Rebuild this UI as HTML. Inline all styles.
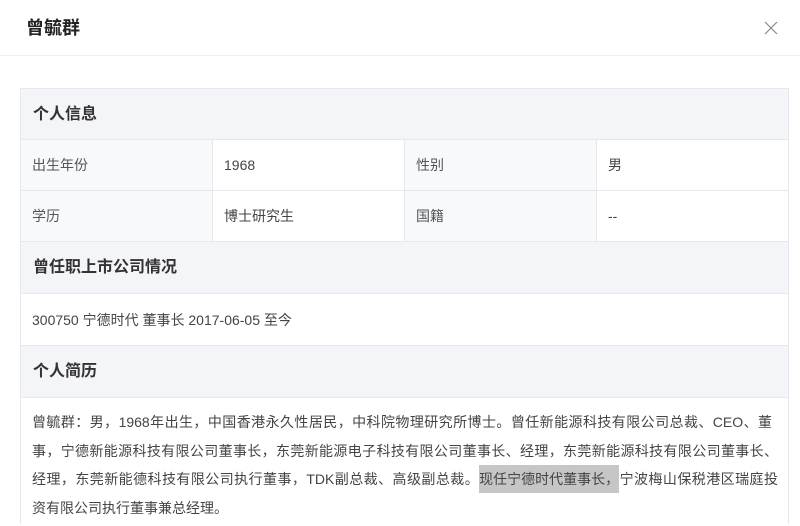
<!DOCTYPE html>
<html><head><meta charset="utf-8"><style>
*{margin:0;padding:0;box-sizing:border-box}
body{width:800px;height:526px;background:#fff;font-family:"Liberation Sans","Noto Sans CJK SC",sans-serif;color:#333;position:relative;overflow:hidden}
.title{position:absolute;left:26px;top:15px;font-size:18px;font-weight:bold;color:#222;line-height:26px}
.close{position:absolute;left:763px;top:20px;width:16px;height:16px}
.hr{position:absolute;left:0;top:55px;width:800px;height:1px;background:#eceef1}
.box{position:absolute;left:20px;top:88px;width:769px;height:436px;border:1px solid #e6e8ec;border-bottom:none}
.r{position:absolute;left:0;width:767px;border-bottom:1px solid #e6e8ec;font-size:14px;color:#444}
.h{background:#f4f5f8;font-weight:bold;font-size:16px;color:#333;padding-left:12px}
.c{position:absolute;top:0;height:100%;padding-left:11px;display:flex;align-items:center}
.l{background:#f8f9fb;color:#555}
.vb{border-right:1px solid #e6e8ec}
.txt{position:absolute;left:0;top:309px;width:767px;padding:10px 11px 0 11px;font-size:14px;line-height:28.5px;color:#444;white-space:nowrap}
.j{text-align:justify;text-align-last:justify;width:746px;height:28.5px}
.hl{background:#c6c6c6;display:inline-block;line-height:28px}
</style></head><body>
<div class="title">曾毓群</div>
<svg class="close" viewBox="0 0 16 16"><path d="M2 2L14 14M14 2L2 14" stroke="#888" stroke-width="1.2"/></svg>
<div class="hr"></div>
<div class="box">
<div class="r h" style="top:0;height:51px;line-height:51px">个人信息</div>
<div class="r" style="top:51px;height:51px">
<div class="c l vb" style="left:0;width:192px">出生年份</div>
<div class="c vb" style="left:192px;width:192px">1968</div>
<div class="c l vb" style="left:384px;width:192px">性别</div>
<div class="c" style="left:576px;width:191px">男</div>
</div>
<div class="r" style="top:102px;height:51px">
<div class="c l vb" style="left:0;width:192px">学历</div>
<div class="c vb" style="left:192px;width:192px">博士研究生</div>
<div class="c l vb" style="left:384px;width:192px">国籍</div>
<div class="c" style="left:576px;width:191px">--</div>
</div>
<div class="r h" style="top:153px;height:52px;line-height:52px">曾任职上市公司情况</div>
<div class="r" style="top:205px;height:52px;line-height:52px;padding-left:11px">300750 宁德时代 董事长 2017-06-05 至今</div>
<div class="r h" style="top:257px;height:52px;line-height:52px">个人简历</div>
<div class="txt">
<div class="j" style="width:740px">曾毓群：男，1968年出生，中国香港永久性居民，中科院物理研究所博士。曾任新能源科技有限公司总裁、CEO、董</div>
<div class="j">事，宁德新能源科技有限公司董事长，东莞新能源电子科技有限公司董事长、经理，东莞新能源科技有限公司董事长、</div>
<div class="j">经理，东莞新能德科技有限公司执行董事，TDK副总裁、高级副总裁。<span class="hl">现任宁德时代董事长，</span>宁波梅山保税港区瑞庭投</div>
<div>资有限公司执行董事兼总经理。</div>
</div>
</div>
</body></html>
